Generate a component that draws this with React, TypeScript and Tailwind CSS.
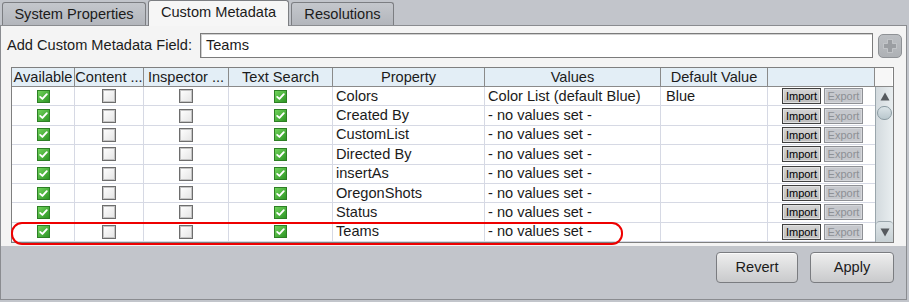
import React from "react";

const rows = [
  "Colors",
  "Created By",
  "CustomList",
  "Directed By",
  "insertAs",
  "OregonShots",
  "Status",
  "Teams",
];

function Checked() {
  return (
    <svg width="13" height="13" viewBox="0 0 13 13">
      <defs>
        <linearGradient id="gchk" x1="0" y1="0" x2="1" y2="1">
          <stop offset="0" stopColor="#74d65e" />
          <stop offset="1" stopColor="#2a9222" />
        </linearGradient>
      </defs>
      <rect x="0.5" y="0.5" width="12" height="12" fill="url(#gchk)" stroke="#2d7f25" />
      <path
        d="M3.2 6.9 L5.4 8.9 L9.8 4.2"
        stroke="#ffffff"
        strokeWidth="1.9"
        fill="none"
        strokeLinecap="round"
        strokeLinejoin="round"
      />
    </svg>
  );
}

function Unchecked() {
  return (
    <div className="w-[14px] h-[14px] border border-[#6d6d6d] bg-gradient-to-br from-white to-[#e4e4e4] shadow-[inset_0_0_0_1px_#c4c4c4]" />
  );
}

const headers: { label: string; w: string }[] = [
  { label: "Available", w: "w-[63px]" },
  { label: "Content ...", w: "w-[69px]" },
  { label: "Inspector ...", w: "w-[85px]" },
  { label: "Text Search", w: "w-[104px]" },
  { label: "Property", w: "w-[152px]" },
  { label: "Values", w: "w-[176px]" },
  { label: "Default Value", w: "w-[107px]" },
  { label: "", w: "w-[107px]" },
];

export default function App() {
  return (
    <div className="w-[909px] h-[302px] bg-[#c2c5cb] font-['Liberation_Sans',Arial,sans-serif] text-[14.6px] leading-[17px] text-[#1b1b1b] relative overflow-hidden">
      {/* Tabs */}
      <div className="flex items-end h-[25px] pl-[2px] gap-[2px]">
        <div className="w-[144px] h-[23px] flex items-center justify-center rounded-t-[3px] border border-b-0 border-[#7c7e82] bg-gradient-to-b from-[#c4c7cc] to-[#b3b6bc]">
          System Properties
        </div>
        <div className="w-[141px] h-[26px] mb-[-1px] relative z-10 flex items-center justify-center rounded-t-[3px] border border-b-0 border-[#7c7e82] bg-[#f6f6f6] pb-[2px]">
          Custom Metadata
        </div>
        <div className="w-[103px] h-[23px] flex items-center justify-center rounded-t-[3px] border border-b-0 border-[#7c7e82] bg-gradient-to-b from-[#c4c7cc] to-[#b3b6bc]">
          Resolutions
        </div>
      </div>

      {/* Body */}
      <div className="w-[907px] h-[275px] border border-[#8a8c90] flex flex-col">
        {/* Panel */}
        <div className="h-[220px] shrink-0 bg-[#f4f4f4] flex flex-col">
          <div className="flex items-center h-[25px] mt-[7px] shrink-0 pl-[6px]">
            <span className="mr-[8px]">Add Custom Metadata Field:</span>
            <div className="w-[673px] h-[25px] border border-[#7b7b7b] bg-white flex items-center pl-[5px] shadow-[inset_1px_1px_0_#d0d0d0]">
              Teams
            </div>
            <div className="ml-[5px] w-[24px] h-[24px] rounded-[5px] border border-[#8e9195] bg-gradient-to-b from-[#bcbfc3] to-[#aeb1b5] flex items-center justify-center">
              <svg width="16" height="16" viewBox="0 0 16 16">
                <path
                  d="M5.5 1.5 H10.5 V5.5 H14.5 V10.5 H10.5 V14.5 H5.5 V10.5 H1.5 V5.5 H5.5 Z"
                  fill="#9b9ea2"
                  stroke="#c9cbce"
                  strokeWidth="0.8"
                />
              </svg>
            </div>
          </div>

          {/* Table */}
          <div className="ml-[10px] mt-[9px] w-[883px] border border-[#7f7f7f] bg-white flex flex-col">
            {/* Header */}
            <div className="flex h-[19px] shrink-0 border-b border-[#8a8a8a]">
              {headers.map((h, i) => (
                <div
                  key={i}
                  className={`${h.w} h-full flex items-center justify-center border-r border-[#8a8a8a] bg-[#e3eef6] whitespace-nowrap overflow-hidden`}
                >
                  {h.label}
                </div>
              ))}
              <div className="w-[17px] h-full bg-[#f7f7f7]" />
            </div>
            {/* Body */}
            <div className="flex h-[155px] shrink-0">
              <div className="w-[863px] flex flex-col">
                {rows.map((name, i) => (
                  <div key={name} className="h-[19.375px] shrink-0 overflow-hidden flex border-b border-[#d6d9e4]">
                    <div className="w-[63px] flex items-center justify-center border-r border-[#d6d9e4]">
                      <Checked />
                    </div>
                    <div className="w-[69px] flex items-center justify-center border-r border-[#d6d9e4]">
                      <Unchecked />
                    </div>
                    <div className="w-[85px] flex items-center justify-center border-r border-[#d6d9e4]">
                      <Unchecked />
                    </div>
                    <div className="w-[104px] flex items-center justify-center border-r border-[#d6d9e4]">
                      <Checked />
                    </div>
                    <div className="w-[152px] flex items-center pl-[3px] border-r border-[#d6d9e4] whitespace-nowrap">
                      {name}
                    </div>
                    <div className="w-[176px] flex items-center pl-[3px] border-r border-[#d6d9e4] whitespace-nowrap">
                      {i === 0 ? "Color List (default Blue)" : "- no values set -"}
                    </div>
                    <div className="w-[107px] flex items-center pl-[5px] border-r border-[#d6d9e4] whitespace-nowrap">
                      {i === 0 ? "Blue" : ""}
                    </div>
                    <div className="w-[107px] flex items-center pl-[14px] gap-[3px] text-[11px] leading-[12px]">
                      <div className="w-[39px] h-[16px] flex items-center justify-center border border-[#3f3f3f] bg-gradient-to-b from-[#d4d4d4] to-[#bdbdbd] shadow-[inset_0_0_0_1px_#e2e2e2] text-black">
                        Import
                      </div>
                      <div className="w-[39px] h-[16px] flex items-center justify-center border border-[#8e9095] bg-[#c6c8cd] shadow-[inset_0_0_0_1px_#d6d8dc] text-[#8d9095]">
                        Export
                      </div>
                    </div>
                  </div>
                ))}
              </div>
              {/* Scrollbar */}
              <div className="w-[18px] h-full flex flex-col border-l border-[#9aa6ac] bg-gradient-to-r from-[#d3dade] to-[#e9eef0]">
                <div className="h-[19px] shrink-0 flex items-center justify-center">
                  <svg width="10" height="9" viewBox="0 0 10 9">
                    <path d="M5 0.5 L9.5 8.5 H0.5 Z" fill="#565a5e" />
                  </svg>
                </div>
                <div className="mx-[1px] h-[14px] shrink-0 rounded-[7px] border border-[#8b9ba2] bg-gradient-to-b from-[#dbe4e8] to-[#b9c7cd]" />
                <div className="flex-1" />
                <div className="h-[21px] shrink-0 flex items-center justify-center border-t border-[#9aa6ac] rounded-t-[4px] bg-gradient-to-b from-[#dde4e7] to-[#c7d0d4]">
                  <svg width="10" height="9" viewBox="0 0 10 9">
                    <path d="M0.5 0.5 H9.5 L5 8.5 Z" fill="#565a5e" />
                  </svg>
                </div>
              </div>
            </div>
          </div>
        </div>

        {/* Buttons */}
        <div className="flex justify-end gap-[12px] pt-[6px] pr-[12px]">
          <div className="w-[82px] h-[31px] flex items-center justify-center rounded-[4px] border border-[#7a7c80] bg-gradient-to-b from-[#eeeeee] to-[#c9cacc] shadow-[inset_0_1px_0_#fafafa]">
            Revert
          </div>
          <div className="w-[84px] h-[31px] flex items-center justify-center rounded-[4px] border border-[#7a7c80] bg-gradient-to-b from-[#eeeeee] to-[#c9cacc] shadow-[inset_0_1px_0_#fafafa]">
            Apply
          </div>
        </div>
      </div>

      {/* Red annotation */}
      <div className="absolute left-[11px] top-[222px] w-[612px] h-[23px] border-2 border-[#ee0000] rounded-[11px] pointer-events-none" />
    </div>
  );
}
